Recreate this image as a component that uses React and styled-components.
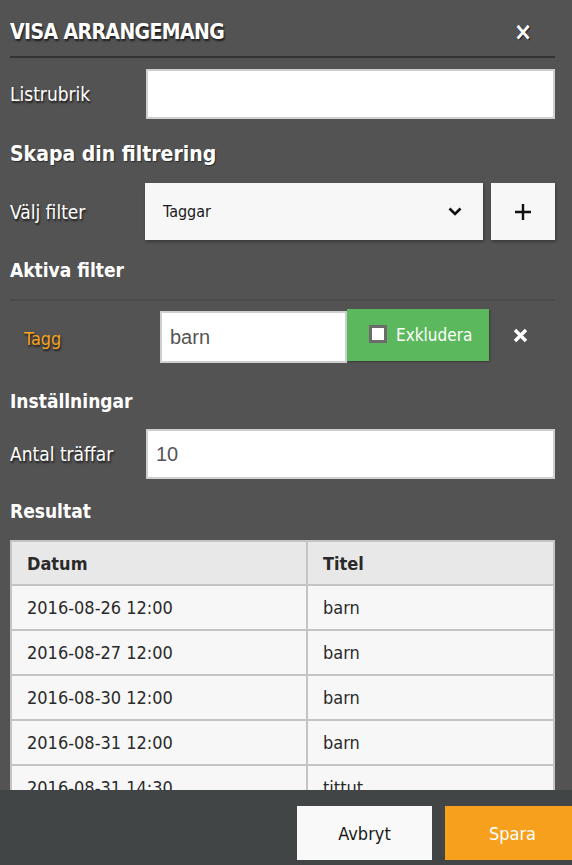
import React from "react";
import styled, { createGlobalStyle } from "styled-components";

const GlobalStyle = createGlobalStyle`
  html, body {
    margin: 0;
    padding: 0;
    background: #535353;
  }
  * {
    box-sizing: border-box;
  }
`;

const FONT = `"Liberation Sans Narrow", "DejaVu Sans Condensed", "Liberation Sans", sans-serif`;

const Dialog = styled.div`
  width: 572px;
  height: 865px;
  display: flex;
  flex-direction: column;
  background: #535353;
  font-family: ${FONT};
  color: #fff;
  overflow: hidden;
`;

const Body = styled.div`
  flex: 1;
  min-height: 0;
  overflow: hidden;
  padding: 0 17px 0 10px;
`;

const Header = styled.div`
  height: 58px;
  padding-top: 8px;
  display: flex;
  align-items: center;
  justify-content: space-between;
  border-bottom: 2px solid #333;
`;

const Title = styled.h1`
  margin: 0;
  font-size: 21px;
  font-weight: bold;
  letter-spacing: -0.6px;
  text-shadow: 1px 2px 2px #1c1c1c;
`;

const CloseButton = styled.button`
  border: 0;
  background: none;
  color: #fff;
  font-family: ${FONT};
  font-size: 24px;
  font-weight: bold;
  margin-right: 23px;
  padding: 0;
  cursor: pointer;
  text-shadow: 1px 1px 1px #222;
`;

const FieldRow = styled.div`
  display: flex;
  align-items: center;
  margin-top: ${(p) => p.$top || 0}px;
`;

const Label = styled.label`
  width: ${(p) => p.$width || 136}px;
  flex-shrink: 0;
  font-size: 19px;
  text-shadow: 1px 2px 2px #1c1c1c;
`;

const TextInput = styled.input`
  flex: 1;
  min-width: 0;
  height: 50px;
  border: 2px solid #cfcfcf;
  background: #fff;
  padding: 0 8px;
  font-family: "Liberation Sans", Arial, sans-serif;
  font-size: 20px;
  color: #555;
  outline: none;
`;

const Heading = styled.h2`
  margin: ${(p) => p.$top || 0}px 0 0;
  font-size: ${(p) => p.$size || 19}px;
  font-weight: bold;
  line-height: 26px;
  text-shadow: ${(p) => (p.$shadow ? "1px 1px 1px #2a2a2a" : "none")};
`;

const Select = styled.div`
  flex: 1;
  height: 57px;
  background: #f7f7f7;
  box-shadow: 1px 2px 3px rgba(0, 0, 0, 0.3);
  display: flex;
  align-items: center;
  justify-content: space-between;
  padding: 0 21px 0 18px;
  color: #1a1a1a;
  font-size: 16px;
`;

const AddButton = styled.button`
  width: 64px;
  height: 57px;
  margin-left: 8px;
  border: 0;
  background: #f7f7f7;
  display: flex;
  align-items: center;
  justify-content: center;
  box-shadow: 1px 2px 3px rgba(0, 0, 0, 0.3);
`;

const Rule = styled.div`
  height: 2px;
  background: #4a4a4a;
  margin-top: 16px;
`;

const FilterRow = styled.div`
  display: flex;
  align-items: center;
  margin-top: 6px;
`;

const FilterName = styled.span`
  width: 150px;
  padding-left: 14px;
  padding-top: 6px;
  flex-shrink: 0;
  font-size: 18px;
  color: #f7a11c;
  text-shadow: 1px 2px 2px #1c1c1c;
`;

const FilterInput = styled.input`
  width: 187px;
  flex: none;
  height: 52px;
  margin-top: 4px;
  border: 2px solid #cfcfcf;
  background: #fff;
  padding: 0 8px;
  font-family: "Liberation Sans", Arial, sans-serif;
  font-size: 20px;
  color: #555;
  outline: none;
`;

const ExcludeButton = styled.label`
  width: 142px;
  flex: none;
  height: 52px;
  background: #5cb85c;
  display: flex;
  align-items: center;
  padding-left: 22px;
  gap: 9px;
  font-size: 17px;
  color: #fff;
  box-shadow: 1px 1px 2px rgba(0, 0, 0, 0.3);
`;

const CheckBox = styled.span`
  width: 18px;
  height: 18px;
  background: #fff;
  border: 3px solid #6b6b6b;
  margin-top: -2px;
`;

const RemoveButton = styled.button`
  border: 0;
  background: none;
  padding: 0;
  margin-left: 24px;
  display: flex;
  cursor: pointer;
`;

const Table = styled.table`
  width: 545px;
  margin-top: 16px;
  border-collapse: collapse;
  border: 2px solid #c4c4c4;
  font-size: 18px;
  color: #2a2a2a;
`;

const HeadCell = styled.th`
  height: 44px;
  background: #e8e8e8;
  border: 2px solid #c4c4c4;
  text-align: left;
  padding: 0 15px;
  font-weight: bold;
  width: ${(p) => p.$width || "auto"};
`;

const Cell = styled.td`
  height: 45px;
  background: #f7f7f7;
  border: 2px solid #c4c4c4;
  padding: 0 15px;
`;

const Footer = styled.div`
  height: 75px;
  flex-shrink: 0;
  background: #424546;
  display: flex;
  justify-content: flex-end;
  align-items: flex-start;
  padding-top: 16px;
  gap: 13px;
  margin-right: -8px;
`;

const FooterButton = styled.button`
  width: 135px;
  height: 54px;
  border: 0;
  font-family: ${FONT};
  font-size: 18px;
  background: ${(p) => (p.$primary ? "#f7a01e" : "#f9f9f9")};
  color: ${(p) => (p.$primary ? "#fff" : "#1a1a1a")};
  cursor: pointer;
`;

const rows = [
  ["2016-08-26 12:00", "barn"],
  ["2016-08-27 12:00", "barn"],
  ["2016-08-30 12:00", "barn"],
  ["2016-08-31 12:00", "barn"],
  ["2016-08-31 14:30", "tittut"],
];

function Chevron() {
  return (
    <svg width="14" height="9" viewBox="0 0 14 9">
      <path d="M1.5 1.5 L7 7 L12.5 1.5" fill="none" stroke="#111" strokeWidth="2.6" />
    </svg>
  );
}

function Plus() {
  return (
    <svg width="16" height="16" viewBox="0 0 16 16">
      <path d="M8 0 V16 M0 8 H16" stroke="#111" strokeWidth="2.4" />
    </svg>
  );
}

function Cross() {
  return (
    <svg width="15" height="15" viewBox="0 0 15 15">
      <path d="M2 2 L13 13 M13 2 L2 13" stroke="#fff" strokeWidth="3.4" />
    </svg>
  );
}

export default function App() {
  return (
    <>
      <GlobalStyle />
      <Dialog>
        <Body>
          <Header>
            <Title>VISA ARRANGEMANG</Title>
            <CloseButton>×</CloseButton>
          </Header>

          <FieldRow $top={11}>
            <Label>Listrubrik</Label>
            <TextInput defaultValue="" />
          </FieldRow>

          <Heading $top={22} $size={21} $shadow>Skapa din filtrering</Heading>

          <FieldRow $top={16}>
            <Label $width={135}>Välj filter</Label>
            <Select>
              Taggar
              <Chevron />
            </Select>
            <AddButton>
              <Plus />
            </AddButton>
          </FieldRow>

          <Heading $top={17}>Aktiva filter</Heading>
          <Rule />

          <FilterRow>
            <FilterName>Tagg</FilterName>
            <FilterInput defaultValue="barn" />
            <ExcludeButton>
              <CheckBox />
              Exkludera
            </ExcludeButton>
            <RemoveButton>
              <Cross />
            </RemoveButton>
          </FilterRow>

          <Heading $top={25}>Inställningar</Heading>

          <FieldRow $top={15}>
            <Label>Antal träffar</Label>
            <TextInput defaultValue="10" />
          </FieldRow>

          <Heading $top={19}>Resultat</Heading>

          <Table>
            <thead>
              <tr>
                <HeadCell $width="296px">Datum</HeadCell>
                <HeadCell>Titel</HeadCell>
              </tr>
            </thead>
            <tbody>
              {rows.map(([date, title], i) => (
                <tr key={i}>
                  <Cell>{date}</Cell>
                  <Cell>{title}</Cell>
                </tr>
              ))}
            </tbody>
          </Table>
        </Body>
        <Footer>
          <FooterButton>Avbryt</FooterButton>
          <FooterButton $primary>Spara</FooterButton>
        </Footer>
      </Dialog>
    </>
  );
}
